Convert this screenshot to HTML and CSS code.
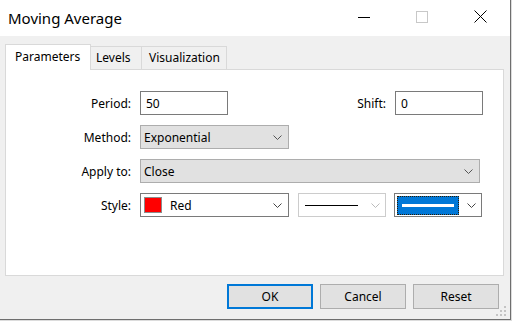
FILE: index.html
```html
<!DOCTYPE html>
<html>
<head>
<meta charset="utf-8">
<link rel="stylesheet" href="styles.css">
</head>
<body>
<div class="window">
  <div class="titlebar">
    <span class="title">Moving Average</span>
    <div class="caption">
      <span class="cap-btn"><svg width="12" height="12" viewBox="0 0 12 12"><path d="M0 6.5H12" stroke="#000" stroke-width="1"/></svg></span>
      <span class="cap-btn"><svg width="12" height="12" viewBox="0 0 12 12"><rect x="0.5" y="0.5" width="11" height="11" fill="none" stroke="#c8c8c8"/></svg></span>
      <span class="cap-btn"><svg width="13" height="13" viewBox="0 0 13 13"><path d="M0.5 0.5L12.5 12.5M12.5 0.5L0.5 12.5" stroke="#000" stroke-width="1"/></svg></span>
    </div>
  </div>
  <div class="content">
    <div class="tabs">
      <div class="tab active">Parameters</div>
      <div class="tab levels">Levels</div>
      <div class="tab vis">Visualization</div>
    </div>
    <div class="panel">
      <div class="row">
        <span class="label">Period:</span>
        <div class="input w88">50</div>
        <span class="label grow">Shift:</span>
        <div class="input w88">0</div>
      </div>
      <div class="row">
        <span class="label">Method:</span>
        <div class="select w149"><span>Exponential</span><svg class="chev" width="9" height="5" viewBox="0 0 9 5"><path d="M0.5 0.5L4.5 4.5L8.5 0.5" fill="none" stroke="#555"/></svg></div>
      </div>
      <div class="row">
        <span class="label">Apply to:</span>
        <div class="select w340"><span>Close</span><svg class="chev" width="9" height="5" viewBox="0 0 9 5"><path d="M0.5 0.5L4.5 4.5L8.5 0.5" fill="none" stroke="#555"/></svg></div>
      </div>
      <div class="row">
        <span class="label">Style:</span>
        <div class="combo w149">
          <span class="swatch"></span>
          <span class="combo-text">Red</span>
          <svg class="chev" width="9" height="5" viewBox="0 0 9 5"><path d="M0.5 0.5L4.5 4.5L8.5 0.5" fill="none" stroke="#444"/></svg>
        </div>
        <div class="combo disabled w88">
          <span class="line"></span>
          <svg class="chev" width="9" height="5" viewBox="0 0 9 5"><path d="M0.5 0.5L4.5 4.5L8.5 0.5" fill="none" stroke="#bbb"/></svg>
        </div>
        <div class="combo w88 widthsel">
          <span class="focus"><span class="thick"></span></span>
          <svg class="chev" width="9" height="5" viewBox="0 0 9 5"><path d="M0.5 0.5L4.5 4.5L8.5 0.5" fill="none" stroke="#444"/></svg>
        </div>
      </div>
    </div>
    <div class="buttons">
      <div class="btn default">OK</div>
      <div class="btn">Cancel</div>
      <div class="btn">Reset</div>
    </div>
  </div>
  <svg class="grip" width="12" height="12" viewBox="0 0 12 12">
    <rect x="9" y="1" width="2" height="2" fill="#c4c4c4"/>
    <rect x="5" y="5" width="2" height="2" fill="#c4c4c4"/>
    <rect x="9" y="5" width="2" height="2" fill="#c4c4c4"/>
    <rect x="1" y="9" width="2" height="2" fill="#c4c4c4"/>
    <rect x="5" y="9" width="2" height="2" fill="#c4c4c4"/>
    <rect x="9" y="9" width="2" height="2" fill="#c4c4c4"/>
  </svg>
</div>
</body>
</html>
```
FILE: styles.css
```css
* { box-sizing: border-box; }
html, body { margin: 0; padding: 0; }
body {
  width: 512px;
  height: 321px;
  background: #dcdcdc;
  font-family: "Noto Sans", "Open Sans", sans-serif;
  font-size: 12px;
  color: #000;
  overflow: hidden;
}
.window {
  position: relative;
  width: 511px;
  height: 320px;
  background: #f0f0f0;
  border-right: 1px solid #6e6e6e;
  border-bottom: 1px solid #6e6e6e;
  display: flex;
  flex-direction: column;
}
.titlebar {
  height: 36px;
  background: #fff;
  display: flex;
  align-items: center;
  flex: none;
}
.title {
  padding-left: 8px;
  font-size: 15px;
  flex: 1;
  padding-bottom: 1px;
}
.caption { display: flex; height: 36px; margin-right: 1px; }
.cap-btn {
  width: 58px;
  display: flex;
  align-items: center;
  justify-content: center;
  padding-bottom: 3px;
}
.content {
  flex: 1;
  padding: 8px 6px 0 5px;
  display: flex;
  flex-direction: column;
}
.tabs {
  display: flex;
  align-items: flex-end;
  height: 25px;
}
.tab {
  height: 23px;
  border: 1px solid #d9d9d9;
  border-bottom: none;
  display: flex;
  align-items: center;
  background: #f0f0f0;
  padding-bottom: 1px;
}
.tab.active {
  height: 26px;
  margin-bottom: -1px;
  background: #fff;
  width: 86px;
  padding-left: 9px;
  padding-bottom: 3px;
  position: relative;
  z-index: 1;
}
.tab.levels { width: 51px; padding-left: 5px; border-left: none; }
.tab.vis { width: 86px; padding-left: 7px; border-left: 1px solid #d9d9d9; margin-left: -1px; }
.panel {
  height: 207px;
  background: #fff;
  border: 1px solid #d9d9d9;
  padding: 21px 20px 0 0;
  display: flex;
  flex-direction: column;
  gap: 10px;
}
.row {
  display: flex;
  align-items: center;
  height: 24px;
}
.label {
  width: 125px;
  text-align: right;
  margin-right: 9px;
  flex: none;
}
.label.grow { flex: 1; width: auto; }
.input {
  height: 24px;
  border: 1px solid #7a7a7a;
  background: #fff;
  padding-left: 5px;
  display: flex;
  align-items: center;
}
.w88 { width: 88px; flex: none; }
.w149 { width: 149px; flex: none; }
.w340 { width: 340px; flex: none; }
.select {
  height: 24px;
  border: 1px solid #adadad;
  background: #e1e1e1;
  padding: 0 6px 0 3px;
  display: flex;
  align-items: center;
  justify-content: space-between;
}
.chev { flex: none; }
.combo {
  height: 24px;
  border: 1px solid #7a7a7a;
  background: #fff;
  display: flex;
  align-items: center;
  padding: 0 6px 0 3px;
  margin-right: 9px;
}
.combo.disabled { border-color: #cccccc; margin-right: 8px; padding-left: 6px; }
.combo.widthsel { margin-right: 0; padding-left: 2px; }
.swatch {
  width: 18px;
  height: 16px;
  background: #ff0000;
  border: 1px solid #8c8c8c;
  flex: none;
}
.combo-text { flex: 1; padding-left: 8px; }
.line {
  width: 53px;
  height: 1px;
  background: #000;
  margin-right: 13px;
  flex: none;
}
.focus {
  width: 62px;
  height: 19px;
  background: #0078d7;
  outline: 1px dotted #2b1a00;
  outline-offset: -1px;
  display: flex;
  align-items: center;
  justify-content: center;
  margin-right: 8px;
  flex: none;
}
.thick {
  width: 52px;
  height: 3px;
  background: #fff;
}
.buttons {
  display: flex;
  justify-content: flex-end;
  gap: 7px;
  margin-top: 8px;
  padding-right: 5px;
}
.btn {
  width: 86px;
  height: 25px;
  border: 1px solid #adadad;
  background: #e1e1e1;
  display: flex;
  align-items: center;
  justify-content: center;
  padding-bottom: 1px;
}
.btn.default { border: 2px solid #0078d7; }
.grip {
  position: absolute;
  right: 3px;
  bottom: 2px;
}
```
